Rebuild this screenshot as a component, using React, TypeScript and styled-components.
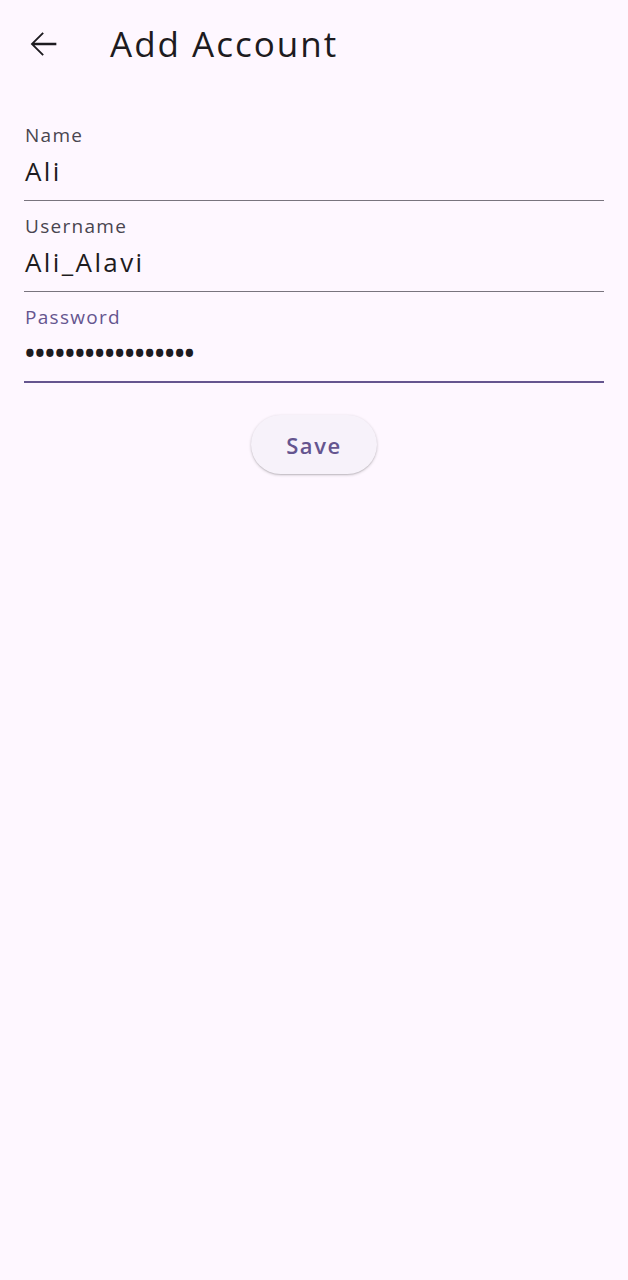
import styled, { createGlobalStyle } from "styled-components";

const Global = createGlobalStyle`
  html, body {
    margin: 0;
    padding: 0;
    background: #fef7ff;
  }
  body {
    font-family: "Open Sans", "Noto Sans", sans-serif;
    color: #1d1b20;
  }
`;

const Page = styled.div`
  min-height: 1280px;
  background: #fef7ff;
`;

const AppBar = styled.header`
  height: 88px;
  display: flex;
  align-items: center;
  padding-left: 23px;
`;

const BackButton = styled.button`
  width: 40px;
  height: 40px;
  padding: 0;
  border: none;
  background: transparent;
  color: #1d1b20;
  display: flex;
  align-items: center;
  justify-content: center;
  cursor: pointer;
`;

const Title = styled.h1`
  margin: 0 0 0 47px;
  font-size: 35px;
  font-weight: 400;
  line-height: 44px;
  letter-spacing: 2px;
  color: #1d1b20;
`;

const Form = styled.form`
  margin-top: 22px;
  padding: 0 24px;
  display: flex;
  flex-direction: column;
`;

const Field = styled.div<{ $focused?: boolean }>`
  display: flex;
  flex-direction: column;
  padding: 12px 0 ${(p) => (p.$focused ? "11px" : "12px")} 1px;
  border-bottom: ${(p) => (p.$focused ? "2px solid #65558f" : "1px solid #79747e")};
`;

const Label = styled.label<{ $focused?: boolean }>`
  font-size: 19px;
  line-height: 26px;
  letter-spacing: 1.3px;
  color: ${(p) => (p.$focused ? "#65558f" : "#49454f")};
`;

const Value = styled.div<{ $secret?: boolean }>`
  margin-top: 6px;
  font-size: 26px;
  line-height: 34px;
  color: #1d1b20;
  letter-spacing: ${(p) => (p.$secret ? "0.2px" : "2.4px")};
  font-weight: ${(p) => (p.$secret ? 700 : 400)};
`;

const Actions = styled.div`
  display: flex;
  justify-content: center;
  margin-top: 32px;
`;

const SaveButton = styled.button`
  width: 126px;
  height: 59px;
  border: none;
  border-radius: 30px;
  background: #f7f2fa;
  color: #65558f;
  font-family: "Open Sans", "Noto Sans", sans-serif;
  font-size: 22px;
  font-weight: 600;
  letter-spacing: 1.6px;
  box-shadow: 0 1px 3px rgba(0, 0, 0, 0.22), 0 1px 1px rgba(0, 0, 0, 0.08);
  cursor: pointer;
`;

function ArrowBack() {
  return (
    <svg width="40" height="40" viewBox="0 0 24 24" fill="currentColor">
      <path d="M20 11.3H6.9l5.6-5.6-.8-.8L4.6 12l7.1 7.1.8-.8-5.6-5.6H20z" />
    </svg>
  );
}

export default function App() {
  return (
    <Page>
      <Global />
      <AppBar>
        <BackButton aria-label="Back">
          <ArrowBack />
        </BackButton>
        <Title>Add Account</Title>
      </AppBar>
      <Form onSubmit={(e) => e.preventDefault()}>
        <Field>
          <Label>Name</Label>
          <Value>Ali</Value>
        </Field>
        <Field>
          <Label>Username</Label>
          <Value>Ali_Alavi</Value>
        </Field>
        <Field $focused>
          <Label $focused>Password</Label>
          <Value $secret>•••••••••••••••••</Value>
        </Field>
        <Actions>
          <SaveButton type="submit">Save</SaveButton>
        </Actions>
      </Form>
    </Page>
  );
}
